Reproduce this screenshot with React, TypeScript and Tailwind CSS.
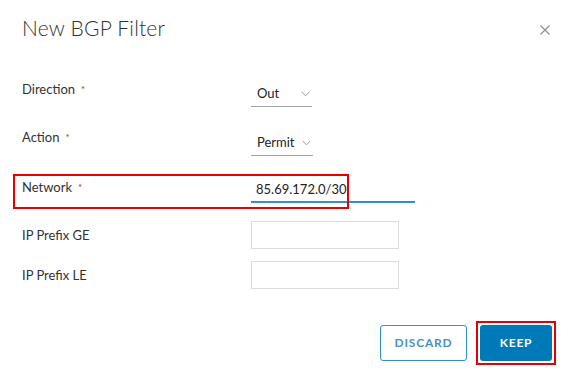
import React from "react";

const font = { fontFamily: "Lato, 'Open Sans', sans-serif" };

function Label({ children, required }: { children: React.ReactNode; required?: boolean }) {
  return (
    <div className="w-[229px] shrink-0 text-[13px] leading-[16px] text-[#333333]">
      {children}
      {required && <span className="ml-[6px] text-[10px] text-[#e12200] align-top">*</span>}
    </div>
  );
}

function Chevron() {
  return (
    <svg width="9" height="6" viewBox="0 0 9 6" className="shrink-0">
      <path d="M0.5 0.8 L4.5 4.8 L8.5 0.8" fill="none" stroke="#9a9a9a" strokeWidth="1" />
    </svg>
  );
}

export default function App() {
  return (
    <div className="w-[568px] h-[373px] bg-white relative overflow-hidden" style={font}>
      <div className="flex items-start justify-between pl-[22px] pr-[17px] pt-[14px]">
        <div className="text-[21px] leading-[28px] font-light text-[#313131] tracking-[0.2px]">New BGP Filter</div>
        <svg width="12" height="12" viewBox="0 0 12 12" className="mt-[10px]">
          <path d="M1.5 1.5 L10.5 10.5 M10.5 1.5 L1.5 10.5" stroke="#8c8c8c" strokeWidth="1.1" fill="none" />
        </svg>
      </div>

      <div className="pl-[22px] mt-[39px]">
        {/* Direction */}
        <div className="flex items-start h-[48px]">
          <Label required>Direction</Label>
          <div className="mt-[1px] w-[61px] h-[25px] border-b border-[#a3a3a3] flex items-center justify-between pl-[6px] pr-[2px] text-[13px] text-[#222]">
            <span>Out</span>
            <Chevron />
          </div>
        </div>
        {/* Action */}
        <div className="flex items-start h-[50px]">
          <Label required>Action</Label>
          <div className="mt-[2px] w-[62px] h-[25px] border-b border-[#a3a3a3] flex items-center justify-between pl-[6px] pr-[2px] text-[13px] text-[#222]">
            <span>Permit</span>
            <Chevron />
          </div>
        </div>
        {/* Network */}
        <div className="relative flex items-start h-[42px]">
          <div className="absolute left-[-9px] top-[-5px] w-[336px] h-[35px] border-2 border-[#e60000] pointer-events-none" />
          <Label required>Network</Label>
          <div className="-mt-[1px] w-[164px] h-[25px] border-b-2 border-[#2f8fd0] flex items-center pl-[5px] text-[13px] text-[#222]">
            <span>85.69.172.0/30</span>
            <span className="inline-block w-[1px] h-[16px] bg-[#111] ml-[1px]" />
          </div>
        </div>
        {/* IP Prefix GE */}
        <div className="flex items-center h-[28px]">
          <Label>IP Prefix GE</Label>
          <div className="w-[148px] h-[28px] border border-[#dcdcdc] bg-white" />
        </div>
        {/* IP Prefix LE */}
        <div className="flex items-center h-[28px] mt-[12px]">
          <Label>IP Prefix LE</Label>
          <div className="w-[148px] h-[28px] border border-[#dcdcdc] bg-white" />
        </div>
      </div>

      <div className="flex justify-end gap-[13px] pr-[16px] mt-[36px]">
        <button className="w-[87px] h-[36px] rounded-[3px] border border-[#2f8fd0] text-[#4a90c8] text-[12px] font-bold tracking-[0.8px] bg-white">
          DISCARD
        </button>
        <div className="relative">
          <div className="absolute left-[-4px] top-[-4px] w-[80px] h-[44px] border-2 border-[#e60000] pointer-events-none" />
          <button className="w-[72px] h-[36px] rounded-[3px] bg-[#0079b8] text-white text-[12px] font-bold tracking-[0.8px]">
            KEEP
          </button>
        </div>
      </div>
    </div>
  );
}
